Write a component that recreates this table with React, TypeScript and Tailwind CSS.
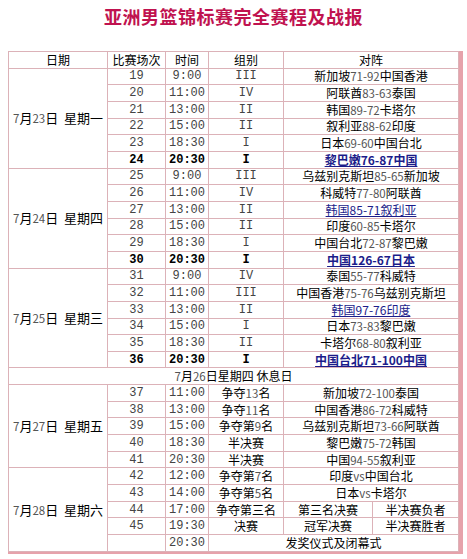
import React from "react";

type Game = {
  no: string;
  time: string;
  group: string;
  match?: string;
  split?: [string, string];
  link?: boolean;
  bold?: boolean;
};

type Day = { date: string; week: string; games: Game[] };

const days: Day[] = [
  {
    date: "7月23日",
    week: "星期一",
    games: [
      { no: "19", time: "9:00", group: "III", match: "新加坡71-92中国香港" },
      { no: "20", time: "11:00", group: "IV", match: "阿联酋83-63泰国" },
      { no: "21", time: "13:00", group: "II", match: "韩国89-72卡塔尔" },
      { no: "22", time: "15:00", group: "II", match: "叙利亚88-62印度" },
      { no: "23", time: "18:30", group: "I", match: "日本69-60中国台北" },
      { no: "24", time: "20:30", group: "I", match: "黎巴嫩76-87中国", link: true, bold: true },
    ],
  },
  {
    date: "7月24日",
    week: "星期四",
    games: [
      { no: "25", time: "9:00", group: "III", match: "乌兹别克斯坦85-65新加坡" },
      { no: "26", time: "11:00", group: "IV", match: "科威特77-80阿联酋" },
      { no: "27", time: "13:00", group: "II", match: "韩国85-71叙利亚", link: true },
      { no: "28", time: "15:00", group: "II", match: "印度60-85卡塔尔" },
      { no: "29", time: "18:30", group: "I", match: "中国台北72-87黎巴嫩" },
      { no: "30", time: "20:30", group: "I", match: "中国126-67日本", link: true, bold: true },
    ],
  },
  {
    date: "7月25日",
    week: "星期三",
    games: [
      { no: "31", time: "9:00", group: "IV", match: "泰国55-77科威特" },
      { no: "32", time: "11:00", group: "III", match: "中国香港75-76乌兹别克斯坦" },
      { no: "33", time: "13:00", group: "II", match: "韩国97-76印度", link: true },
      { no: "34", time: "15:00", group: "I", match: "日本73-83黎巴嫩" },
      { no: "35", time: "18:30", group: "II", match: "卡塔尔68-80叙利亚" },
      { no: "36", time: "20:30", group: "I", match: "中国台北71-100中国", link: true, bold: true },
    ],
  },
];

const finals: Day[] = [
  {
    date: "7月27日",
    week: "星期五",
    games: [
      { no: "37", time: "11:00", group: "争夺13名", match: "新加坡72-100泰国" },
      { no: "38", time: "13:00", group: "争夺11名", match: "中国香港86-72科威特" },
      { no: "39", time: "15:00", group: "争夺第9名", match: "乌兹别克斯坦73-66阿联酋" },
      { no: "40", time: "18:30", group: "半决赛", match: "黎巴嫩75-72韩国" },
      { no: "41", time: "20:30", group: "半决赛", match: "中国94-55叙利亚" },
    ],
  },
  {
    date: "7月28日",
    week: "星期六",
    games: [
      { no: "42", time: "12:00", group: "争夺第7名", match: "印度vs中国台北" },
      { no: "43", time: "14:00", group: "争夺第5名", match: "日本vs卡塔尔" },
      { no: "44", time: "17:00", group: "争夺第三名", split: ["第三名决赛", "半决赛负者"] },
      { no: "45", time: "19:30", group: "决赛", split: ["冠军决赛", "半决赛胜者"] },
    ],
  },
];

// latin bits (scores, times) come out thinner and greyer than the hanzi
const Mix = ({ text }: { text: string }) => (
  <>
    {text.split(/([0-9A-Za-z:\-]+)/).map((part, i) =>
      /[0-9A-Za-z]/.test(part) ? (
        <span key={i} className="text-[11.5px] text-[#555]">
          {part}
        </span>
      ) : (
        <React.Fragment key={i}>{part}</React.Fragment>
      )
    )}
  </>
);

const td = "border border-[#dcb2b8] text-center align-middle p-0 h-[16.67px] leading-[12px] whitespace-nowrap";
const latin = "font-['Liberation_Mono','Noto_Sans_CJK_SC',monospace] text-[12px] text-[#444]";

const GameRow = ({ g, day, span }: { g: Game; day?: Day; span: number }) => (
  <tr>
    {day && (
      <td rowSpan={span} className={`${td} text-[13px]`}>
        <Mix text={day.date} />
        &nbsp;&nbsp;{day.week}
      </td>
    )}
    <td className={`${td} ${latin} ${g.bold ? "font-bold text-black" : ""}`}>{g.no}</td>
    <td className={`${td} ${latin} ${g.bold ? "font-bold text-black" : ""}`}>{g.time}</td>
    <td
      className={`${td} ${/[A-Z]/.test(g.group) ? latin : ""} ${g.bold ? "font-bold text-black" : ""}`}
    >
      {/[A-Z]/.test(g.group) ? g.group : <Mix text={g.group} />}
    </td>
    {g.split ? (
      <>
        <td className={td}>{g.split[0]}</td>
        <td className={td}>{g.split[1]}</td>
      </>
    ) : (
      <td colSpan={2} className={td}>
        {g.link ? (
          <a href="#" className={`text-[#1c1c8a] underline ${g.bold ? "font-bold" : ""}`}>
            {g.match}
          </a>
        ) : (
          <Mix text={g.match ?? ""} />
        )}
      </td>
    )}
  </tr>
);

export default function App() {
  return (
    <div className="w-[467px] h-[559px] bg-white font-['Noto_Sans_CJK_SC',sans-serif] text-black text-[12px]">
      <h1 className="pt-[5px] text-center text-[18px] leading-[22px] font-bold text-[#c0124f] tracking-[0.5px]">
        亚洲男篮锦标赛完全赛程及战报
      </h1>
      <div className="ml-[8px] mt-[24px] inline-block border-r-[4px] border-b-[2px] border-[#e6a2ab]">
        <table className="border-collapse table-fixed w-[450px]">
          <colgroup>
            <col className="w-[99px]" />
            <col className="w-[58px]" />
            <col className="w-[43px]" />
            <col className="w-[75px]" />
            <col className="w-[89px]" />
            <col className="w-[86px]" />
          </colgroup>
          <tbody>
            <tr>
              <td className={td}>日期</td>
              <td className={td}>比赛场次</td>
              <td className={td}>时间</td>
              <td className={td}>组别</td>
              <td colSpan={2} className={td}>
                对阵
              </td>
            </tr>
            {days.map((d) =>
              d.games.map((g, i) => (
                <GameRow key={g.no} g={g} day={i === 0 ? d : undefined} span={d.games.length} />
              ))
            )}
            <tr>
              <td colSpan={6} className={td}>
                <Mix text="7月26日星期四" />
                &nbsp;休息日
              </td>
            </tr>
            {finals.map((d, di) =>
              d.games.map((g, i) => (
                <GameRow
                  key={g.no}
                  g={g}
                  day={i === 0 ? d : undefined}
                  span={di === 1 ? d.games.length + 1 : d.games.length}
                />
              ))
            )}
            <tr>
              <td className={td}></td>
              <td className={`${td} ${latin}`}>20:30</td>
              <td colSpan={3} className={td}>
                发奖仪式及闭幕式
              </td>
            </tr>
          </tbody>
        </table>
      </div>
    </div>
  );
}
